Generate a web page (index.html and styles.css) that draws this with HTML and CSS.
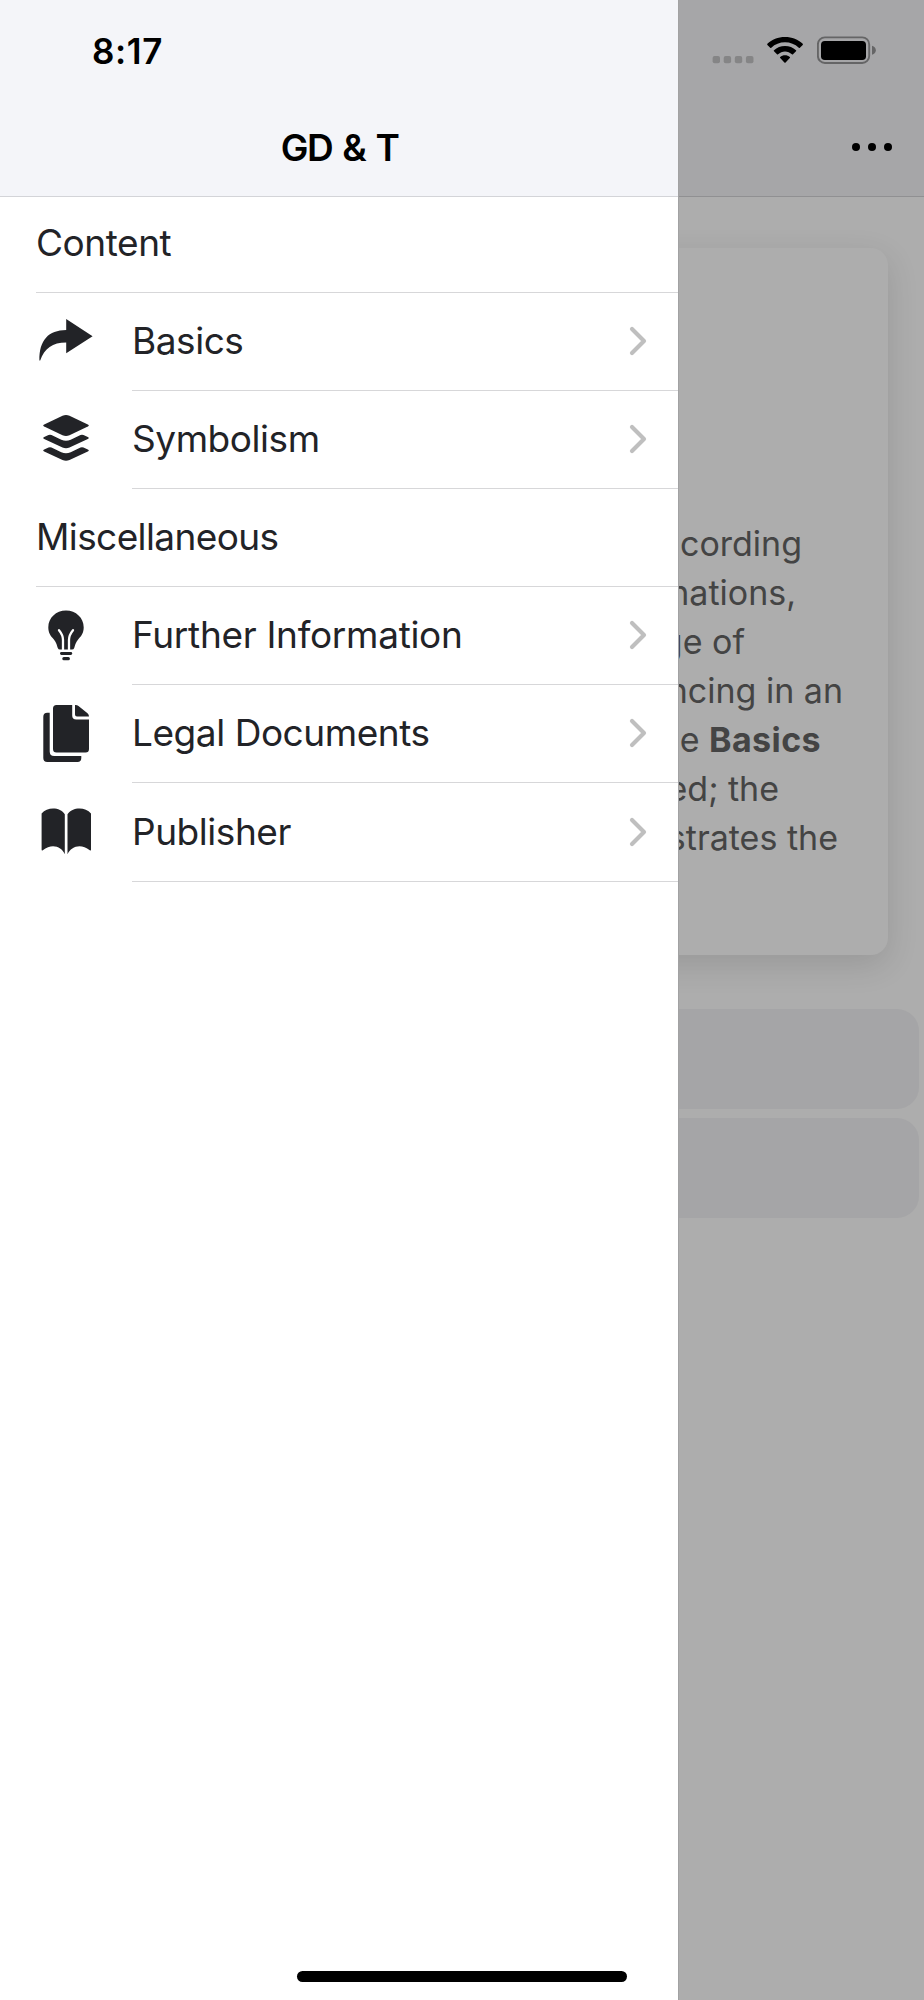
FILE: index.html
```html
<!DOCTYPE html>
<html lang="en">
  <head>
    <meta charset="UTF-8" />
    <title>GD &amp; T</title>
    <link rel="stylesheet" href="styles.css">
  </head>
  <body>
    <div id="app">
      <!-- side menu -->
      <nav class="menu">
        <header class="menu-header">
          <div class="time">8:17</div>
          <h1>GD &amp; T</h1>
        </header>
        <ul class="list">
          <li class="list-header"><span class="label">Content</span></li>
          <li class="item">
            <svg class="icon" viewBox="0 0 60 60"><path d="M3.4 49.5C3.2 29 12.5 19.2 30.2 19V8L56.6 25.3 30.2 42.3V31.6C16.5 31.6 8.5 37.5 4.2 49.5z"/></svg>
            <div class="inner"><span class="label">Basics</span><svg class="chevron" viewBox="0 0 18 30"><path d="M3 3l12 12L3 27"/></svg></div>
          </li>
          <li class="item">
            <svg class="icon" viewBox="0 0 60 60">
              <path d="M8.2 15.5L26.5 6.8Q30 5.2 33.5 6.8L51.8 15.5Q53.8 16.5 51.8 17.6L33.5 26.2Q30 27.7 26.5 26.2L8.2 17.6Q6.2 16.5 8.2 15.5z"/>
              <path id="layer" d="M8.2 28L12.5 26Q14 25.3 15.5 26L25.3 30.7Q30 32.8 34.7 30.7L44.5 26Q46 25.3 47.5 26L51.8 28Q53.8 29 51.8 30.1L33.5 38.5Q30 40 26.5 38.5L8.2 30.1Q6.2 29 8.2 28z"/>
              <use href="#layer" y="12.5"/>
            </svg>
            <div class="inner"><span class="label">Symbolism</span><svg class="chevron" viewBox="0 0 18 30"><path d="M3 3l12 12L3 27"/></svg></div>
          </li>
          <li class="list-header"><span class="label misc">Miscellaneous</span></li>
          <li class="item">
            <svg class="icon" viewBox="0 0 60 60">
              <path d="M30 4.5C20 4.5 12.3 12 12.3 21.2C12.3 27 14.6 29.7 17.5 33C20.8 37 20.8 39.5 21.8 42Q22.3 43.5 24 43.5H36Q37.7 43.5 38.2 42C39.2 39.5 39.2 37 42.5 33C45.4 29.7 47.7 27 47.7 21.2C47.7 12 40 4.5 30 4.5z"/>
              <path class="cut" d="M23 24.2Q27 29 27 34V44M37 24.2Q33 29 33 34V44"/>
              <rect x="24" y="46" width="12.2" height="3" rx="1.4"/>
              <rect x="26.3" y="51" width="7.6" height="3.2" rx="1.5"/>
            </svg>
            <div class="inner"><span class="label further">Further Information</span><svg class="chevron" viewBox="0 0 18 30"><path d="M3 3l12 12L3 27"/></svg></div>
          </li>
          <li class="item">
            <svg class="icon" viewBox="0 0 60 60">
              <path d="M13.7 8.7H11.3Q7.3 8.7 7.3 12.7V54Q7.3 58 11.3 58H41.5Q45.3 58 45.3 54V52H18.2Q13.7 52 13.7 47.5z"/>
              <path d="M36.2 1H20.5Q17 1 17 4.5V45Q17 48.5 20.5 48.5H49.5Q53 48.5 53 45V15.6H40.2Q36.2 15.6 36.2 11.6z"/>
              <path d="M39 1Q41 .8 42.5 2L51.5 9.3Q53 10.5 53 12.6H41Q39 12.6 39 10.6z"/>
            </svg>
            <div class="inner"><span class="label">Legal Documents</span><svg class="chevron" viewBox="0 0 18 30"><path d="M3 3l12 12L3 27"/></svg></div>
          </li>
          <li class="item">
            <svg class="icon" viewBox="0 0 60 60">
              <path d="M5.6 11.5C11.5 4.5 24.5 5.2 28.8 12.3V52.3C25.5 44.5 16 41 6.8 48.2Q5.6 49 5.6 47.6z"/>
              <path d="M55 11.5C49.1 4.5 36.1 5.2 31.5 12.3V52.3C35.1 44.5 44.6 41 53.8 48.2Q55 49 55 47.6z"/>
            </svg>
            <div class="inner"><span class="label">Publisher</span><svg class="chevron" viewBox="0 0 18 30"><path d="M3 3l12 12L3 27"/></svg></div>
          </li>
        </ul>
        <div class="home-bar"></div>
      </nav>

      <!-- dimmed page beside the menu -->
      <main class="page">
        <header class="page-header">
          <div class="status">
            <svg width="42" height="30" viewBox="712 35 42 30" fill="#858586">
              <rect x="712.6" y="56" width="7.4" height="7.3" rx="2"/>
              <rect x="723.7" y="56" width="7.4" height="7.3" rx="2"/>
              <rect x="734.8" y="56" width="7.4" height="7.3" rx="2"/>
              <rect x="745.9" y="56" width="7.6" height="7.3" rx="2"/>
            </svg>
            <svg width="36" height="30" viewBox="767 35 36 30">
              <path d="M785 37C778 37 771.8 39.7 767.4 43.8Q766.9 44.3 767.4 44.9L770.2 47.7Q770.7 48.2 771.3 47.7C775 44.3 779.8 42.3 785 42.3S795 44.3 798.8 47.7Q799.4 48.2 799.9 47.7L802.7 44.9Q803.2 44.3 802.7 43.8C798.3 39.7 792 37 785 37z"/>
              <path d="M785 46C780.8 46 776.9 47.6 774 50.2Q773.4 50.8 774 51.3L777 54.2Q777.5 54.7 778.1 54.2C780 52.5 782.4 51.4 785 51.4S790 52.5 791.9 54.2Q792.5 54.7 793 54.2L796 51.3Q796.6 50.8 796 50.2C793.1 47.6 789.2 46 785 46z"/>
              <path d="M785 55.2C783.1 55.2 781.5 55.8 780.2 56.9Q779.6 57.5 780.2 58.1L784.4 62.5Q785 63.1 785.6 62.5L789.8 58.1Q790.4 57.5 789.8 56.9C788.5 55.8 786.9 55.2 785 55.2z"/>
            </svg>
            <svg width="60" height="30" viewBox="817 35 60 30">
              <rect x="817.9" y="37.4" width="51.3" height="25.6" rx="7" fill="none" stroke="#656566" stroke-width="1.9"/>
              <rect x="821" y="41" width="45" height="19" rx="3.8"/>
              <path d="M872 45.7Q875.8 47 875.8 50.2T872 54.8z" fill="#656566"/>
            </svg>
          </div>
          <div class="more"><i></i><i></i><i></i></div>
        </header>
        <section class="card">
          <p>
            <span>ccording</span>
            <span>nations,</span>
            <span>ge of</span>
            <span>ncing in an</span>
            <span>e <b>Basics</b></span>
            <span>ed; the</span>
            <span>strates the</span>
          </p>
        </section>
        <div class="button"></div>
        <div class="button"></div>
      </main>
    </div>
  </body>
</html>
```
FILE: styles.css
```css
* {
    box-sizing: border-box;
}

body {
    margin: 0;
    font-family: Inter, "Liberation Sans", sans-serif;
    color: #222327;
    background-color: #adadad;
}

#app {
    display: flex;
    width: 924px;
    height: 2000px;
    overflow: hidden;
}

/* menu */
.menu {
    display: flex;
    flex-direction: column;
    width: 678px;
    height: 2000px;
    background-color: #fff;
}

.menu-header {
    height: 197px;
    background-color: #f4f5f9;
    border-bottom: 1px solid #d3d4d8;
    color: #000;
}

.time {
    padding: 31px 0 0 92px;
    height: 98px;
    font-size: 35px;
    line-height: 40px;
    font-weight: 600;
    letter-spacing: 0.6px;
}

h1 {
    margin: 0;
    padding-left: 1px;
    text-align: center;
    font-size: 37px;
    line-height: 100px;
    font-weight: 600;
    letter-spacing: -1.6px;
    word-spacing: 2.5px;
}

.list {
    flex: 1;
    margin: 0;
    padding: 0;
    list-style: none;
    font-size: 37px;
    line-height: 44px;
}

.list-header {
    display: flex;
    align-items: center;
    height: 98.2px;
    margin-left: 36px;
    border-bottom: 1px solid #d7d7d9;
}

.list-header:first-child {
    height: 95.5px;
    padding-bottom: 3px;
}

.item {
    display: flex;
    align-items: center;
    height: 98.2px;
    padding-left: 36px;
}

.icon {
    width: 60px;
    height: 60px;
    margin: -1px 36px 0 0;
    fill: #222327;
}

.cut {
    fill: none;
    stroke: #fff;
    stroke-width: 2.3;
    stroke-linecap: round;
}

.inner {
    display: flex;
    flex: 1;
    align-items: center;
    justify-content: space-between;
    height: 98.2px;
    padding: 0 31px 1px 0;
    border-bottom: 1px solid #d7d7d9;
}

.chevron {
    width: 18px;
    height: 30px;
    fill: none;
    stroke: #bfbfbf;
    stroke-width: 4.2;
    stroke-linecap: round;
    stroke-linejoin: round;
}

.label {
    letter-spacing: -0.45px;
}

.label.misc {
    letter-spacing: -0.6px;
}

.label.further {
    letter-spacing: -0.3px;
}

.home-bar {
    width: 330px;
    height: 11px;
    margin: 0 0 18px 297px;
    border-radius: 6px;
    background-color: #000;
}

/* page */
.page {
    width: 246px;
    height: 2000px;
    overflow: hidden;
    border-left: 1px solid #a2a2a3;
    background-color: #adadad;
}

.page-header {
    height: 197px;
    background-color: #a6a6a8;
    border-bottom: 1px solid #909092;
}

.status {
    display: flex;
    gap: 13px;
    height: 100px;
    padding: 35px 0 0 33px;
}

.status svg:last-child {
    margin-left: 1px;
}

.more {
    display: flex;
    gap: 8px;
    padding: 43px 0 0 173px;
}

.more i {
    width: 8px;
    height: 8px;
    border-radius: 50%;
    background-color: #000;
}

.card {
    width: 245px;
    height: 707px;
    margin: 51px 0 54px -36px;
    padding-top: 271px;
    border-radius: 0 17px 17px 0;
    background-color: #adadad;
    box-shadow: 0 10px 32px rgba(0, 0, 0, 0.12);
}

.card p {
    margin: 0;
    color: #444;
    font-size: 34px;
    line-height: 49px;
}

.card b {
    letter-spacing: 0.4px;
}

.card span {
    display: flex;
    justify-content: flex-end;
    padding-right: 86px;
    white-space: pre;
}

.card span:nth-child(2) { padding-right: 92px; }
.card span:nth-child(3) { padding-right: 143px; }
.card span:nth-child(4) { padding-right: 45px; }
.card span:nth-child(5) { padding-right: 67px; }
.card span:nth-child(6) { padding-right: 109px; }
.card span:nth-child(7) { padding-right: 50px; }

.button {
    width: 240px;
    height: 100px;
    margin-bottom: 9px;
    border-radius: 0 22px 22px 0;
    background-color: #a5a5a7;
}
```
